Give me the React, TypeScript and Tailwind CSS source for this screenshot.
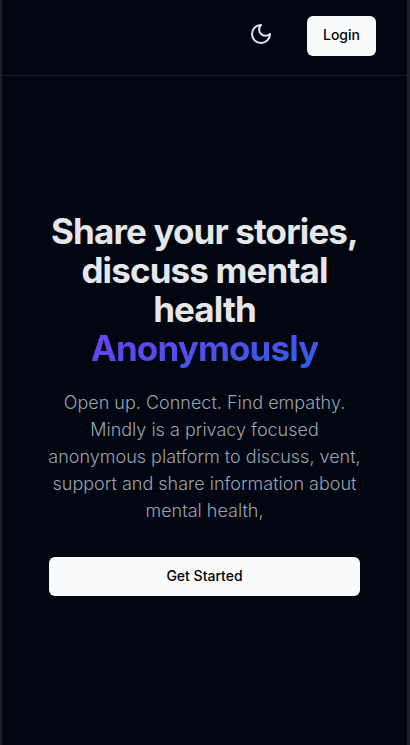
import React from "react";

function MoonIcon() {
  return (
    <svg
      width="24"
      height="24"
      viewBox="0 0 24 24"
      fill="none"
      stroke="currentColor"
      strokeWidth="2"
      strokeLinecap="round"
      strokeLinejoin="round"
      aria-hidden="true"
    >
      <path d="M12 3a6 6 0 0 0 9 9 9 9 0 1 1-9-9Z" />
    </svg>
  );
}

export default function App() {
  return (
    <div className="flex min-h-screen flex-col border-r-3 border-l-2 border-[#1e2022] bg-[#020610] font-['Inter',sans-serif] text-slate-50">
      <header className="flex h-19 items-start justify-end gap-7 border-b border-[#1b202b] pt-4 pr-[31px]">
        <button type="button" aria-label="Toggle theme" className="flex size-9 items-center justify-center rounded-md text-slate-200">
          <MoonIcon />
        </button>
        <button type="button" className="h-10 rounded-md bg-slate-50 px-4 pb-0.5 text-sm font-medium text-[#020205]">
          Login
        </button>
      </header>
      <main className="flex flex-col items-center px-[45px] pt-34 text-center">
        <h1 className="text-[35px] leading-[39px] font-bold tracking-tight text-[#e6e7ea]">
          Share your stories, discuss mental health{" "}
          <span className="bg-linear-to-br/srgb from-[#7c3aed] to-[#2563eb] bg-clip-text text-transparent">
            Anonymously
          </span>
        </h1>
        <p className="mt-[21px] text-lg leading-[27px] font-light text-[#9aa3b2]">
          Open up. Connect. Find empathy. Mindly is a privacy focused anonymous platform to discuss, vent, support and share information about mental health,
        </p>
        <div className="mt-[33px] w-full px-[2px]">
          <button type="button" className="h-[39px] w-full rounded-md bg-slate-50 pb-0.5 text-sm font-medium text-[#020205]">
            Get Started
          </button>
        </div>
      </main>
    </div>
  );
}
